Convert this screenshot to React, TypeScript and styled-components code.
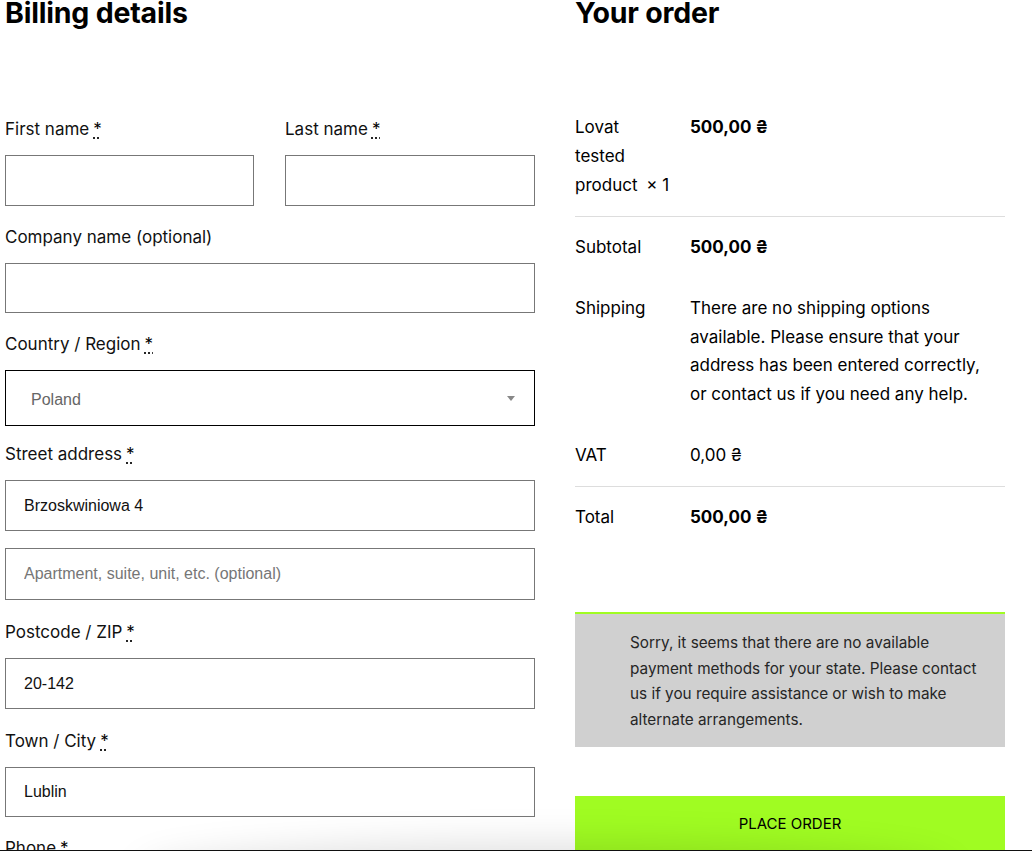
import React from 'react'
import styled, { createGlobalStyle } from 'styled-components'

const GlobalStyle = createGlobalStyle`
  html, body {
    margin: 0;
    padding: 0;
    background: #ffffff;
  }
  body {
    font-family: Inter, "Noto Sans", "DejaVu Sans", sans-serif;
    color: #000000;
    -webkit-font-smoothing: antialiased;
  }
  * { box-sizing: border-box; }
`

const Page = styled.div`
  display: flex;
  align-items: flex-start;
  gap: 40px;
  padding-left: 5px;
`

const BillingColumn = styled.div`
  width: 530px;
  flex: none;
`

const OrderColumn = styled.div`
  width: 430px;
  flex: none;
`

const Heading = styled.h3<{ $gap: number }>`
  margin: -5px 0 ${p => p.$gap}px;
  font-size: 28.5px;
  line-height: 36px;
  font-weight: 700;
  letter-spacing: -0.2px;
`

const FieldPair = styled.div`
  display: grid;
  grid-template-columns: 249px 250px;
  column-gap: 31px;
`

const Field = styled.div<{ $gap?: number }>`
  margin-bottom: ${p => (p.$gap ?? 17)}px;
`

const Label = styled.label`
  display: block;
  font-size: 17px;
  line-height: 28px;
  margin-bottom: 12px;
  color: #111111;
`

const Required = styled.abbr`
  margin-left: 4px;
  color: #000000;
  text-decoration: underline dotted;
  text-underline-offset: 3px;
  border: none;
`

const TextInput = styled.input<{ $h?: number }>`
  display: block;
  width: 100%;
  height: ${p => p.$h ?? 51}px;
  padding: 0 18px;
  border: 1px solid #777777;
  border-radius: 0;
  background: #ffffff;
  font-family: "Liberation Sans", Arial, sans-serif;
  font-size: 16px;
  color: #111111;
  outline: none;

  &::placeholder {
    color: #767676;
  }
`

const SelectBox = styled.div`
  position: relative;
  display: flex;
  align-items: center;
  height: 56px;
  padding: 4px 40px 0 25px;
  border: 1px solid #000000;
  font-family: "Liberation Sans", Arial, sans-serif;
  font-size: 16px;
  color: #666666;
`

const SelectArrow = styled.span`
  position: absolute;
  right: 19px;
  top: 50%;
  margin-top: -2px;
  width: 0;
  height: 0;
  border-left: 4px solid transparent;
  border-right: 4px solid transparent;
  border-top: 5px solid #888888;
`

const OrderTable = styled.div``

const OrderRow = styled.div<{ $top?: boolean; $bottom?: boolean }>`
  display: grid;
  grid-template-columns: 115px 1fr;
  padding: 16px 0;
  font-size: 17px;
  line-height: 28.9px;
  border-top: ${p => (p.$top ? '1px solid #dddddd' : 'none')};
  border-bottom: ${p => (p.$bottom ? '1px solid #dddddd' : 'none')};
`

const NameCell = styled.div`
  padding-right: 25px;
`

const ValueCell = styled.div<{ $bold?: boolean }>`
  padding-right: 15px;
  font-weight: ${p => (p.$bold ? 700 : 400)};
`

const Quantity = styled.span`
  margin-left: 4px;
  white-space: nowrap;
`

const PaymentNotice = styled.div`
  margin-top: 64px;
  border-top: 2px solid #a0fc22;
  background: #d0d0d0;
  padding: 16px 18px 15px 55px;
  font-size: 15.3px;
  line-height: 25.5px;
  color: #262626;
`

const PlaceOrder = styled.button`
  display: block;
  width: 100%;
  margin-top: 49px;
  padding: 15px;
  border: none;
  border-radius: 0;
  background: #a0fc22;
  font-family: Inter, "Noto Sans", sans-serif;
  font-size: 15px;
  line-height: 25.5px;
  color: #000000;
  text-transform: uppercase;
  cursor: pointer;
`

const BottomBar = styled.div`
  position: fixed;
  left: 0;
  right: 0;
  top: 850px;
  height: 60px;
  background: #111111;
`

const BarGlow = styled.div`
  position: absolute;
  left: 150px;
  right: 90px;
  top: 6px;
  height: 40px;
  border-radius: 50%;
  box-shadow: 0 0 38px 12px rgba(0, 0, 0, 0.13);
`

const Req = () => <Required title="required">*</Required>

export default function App() {
  return (
    <>
      <GlobalStyle />
      <Page>
        <BillingColumn>
          <Heading $gap={84}>Billing details</Heading>
          <FieldPair>
            <Field>
              <Label>First name<Req /></Label>
              <TextInput />
            </Field>
            <Field>
              <Label>Last name<Req /></Label>
              <TextInput />
            </Field>
          </FieldPair>
          <Field>
            <Label>Company name (optional)</Label>
            <TextInput $h={50} />
          </Field>
          <Field $gap={14}>
            <Label>Country / Region<Req /></Label>
            <SelectBox>
              Poland
              <SelectArrow />
            </SelectBox>
          </Field>
          <Field>
            <Label>Street address<Req /></Label>
            <TextInput defaultValue="Brzoskwiniowa 4" />
          </Field>
          <Field $gap={18}>
            <TextInput $h={52} placeholder="Apartment, suite, unit, etc. (optional)" />
          </Field>
          <Field $gap={18}>
            <Label>Postcode / ZIP<Req /></Label>
            <TextInput defaultValue="20-142" />
          </Field>
          <Field>
            <Label>Town / City<Req /></Label>
            <TextInput $h={50} defaultValue="Lublin" />
          </Field>
          <Field>
            <Label>Phone<Req /></Label>
            <TextInput />
          </Field>
        </BillingColumn>

        <OrderColumn>
          <Heading $gap={66}>Your order</Heading>
          <OrderTable>
            <OrderRow $bottom>
              <NameCell>
                Lovat tested product{'\u00a0'}
                <Quantity>×{'\u00a0'}1</Quantity>
              </NameCell>
              <ValueCell $bold>500,00 ₴</ValueCell>
            </OrderRow>
            <OrderRow>
              <NameCell>Subtotal</NameCell>
              <ValueCell $bold>500,00 ₴</ValueCell>
            </OrderRow>
            <OrderRow>
              <NameCell>Shipping</NameCell>
              <ValueCell>
                There are no shipping options available. Please ensure that your address has been
                entered correctly, or contact us if you need any help.
              </ValueCell>
            </OrderRow>
            <OrderRow>
              <NameCell>VAT</NameCell>
              <ValueCell>0,00 ₴</ValueCell>
            </OrderRow>
            <OrderRow $top>
              <NameCell>Total</NameCell>
              <ValueCell $bold>500,00 ₴</ValueCell>
            </OrderRow>
          </OrderTable>

          <PaymentNotice>
            Sorry, it seems that there are no available payment methods for your state. Please
            contact us if you require assistance or wish to make alternate arrangements.
          </PaymentNotice>

          <PlaceOrder type="button">Place order</PlaceOrder>
        </OrderColumn>
      </Page>
      <BottomBar>
        <BarGlow />
      </BottomBar>
    </>
  )
}
